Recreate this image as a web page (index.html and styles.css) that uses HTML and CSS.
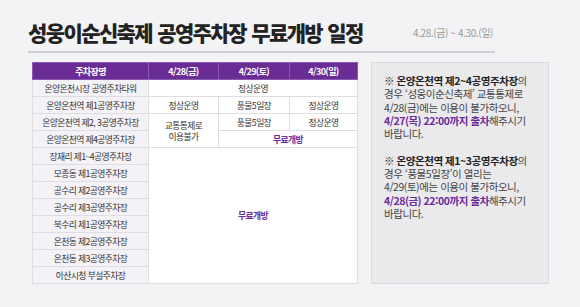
FILE: index.html
```html
<!DOCTYPE html>
<html lang="ko">
<head>
<meta charset="utf-8">
<link rel="stylesheet" href="styles.css">
</head>
<body>
<div class="page">
  <div class="head">
    <h1 class="title">성웅이순신축제 공영주차장 무료개방 일정</h1>
    <span class="date">4.28.(금) ~ 4.30.(일)</span>
  </div>
  <div class="content">
    <table class="sched">
      <colgroup>
        <col class="c1"><col class="c2"><col class="c3"><col class="c4">
      </colgroup>
      <thead>
        <tr><th>주차장명</th><th>4/28(금)</th><th>4/29(토)</th><th>4/30(일)</th></tr>
      </thead>
      <tbody>
        <tr><td class="name">온양온천시장 공영주차타워</td><td colspan="3">정상운영</td></tr>
        <tr><td class="name">온양온천역 제1공영주차장</td><td>정상운영</td><td>풍물5일장</td><td>정상운영</td></tr>
        <tr><td class="name">온양온천역 제2, 3공영주차장</td><td rowspan="2" class="two">교통통제로<br>이용불가</td><td>풍물5일장</td><td>정상운영</td></tr>
        <tr><td class="name">온양온천역 제4공영주차장</td><td colspan="2" class="free">무료개방</td></tr>
        <tr><td class="name">장재리 제1~4공영주차장</td><td colspan="3" rowspan="8" class="free">무료개방</td></tr>
        <tr><td class="name">모종동 제1공영주차장</td></tr>
        <tr><td class="name">공수리 제2공영주차장</td></tr>
        <tr><td class="name">공수리 제3공영주차장</td></tr>
        <tr><td class="name">북수리 제1공영주차장</td></tr>
        <tr><td class="name">온천동 제2공영주차장</td></tr>
        <tr><td class="name">온천동 제3공영주차장</td></tr>
        <tr><td class="name">아산시청 부설주차장</td></tr>
      </tbody>
    </table>
    <div class="notes">
      <p><b>※ 온양온천역 제2~4공영주차장</b>의<br>경우 ‘성웅이순신축제’ 교통통제로<br>4/28(금)에는 이용이 불가하오니,<br><b class="hl">4/27(목) 22:00까지 출차</b>해주시기<br>바랍니다.</p>
      <p><b>※ 온양온천역 제1~3공영주차장</b>의<br>경우 ‘풍물5일장’이 열리는<br>4/29(토)에는 이용이 불가하오니,<br><b class="hl">4/28(금) 22:00까지 출차</b>해주시기<br>바랍니다.</p>
    </div>
  </div>
</div>
</body>
</html>
```

FILE: styles.css
```css
* { box-sizing: border-box; }
html, body { margin: 0; padding: 0; }
body {
  background: #f3f3f6;
  font-family: "Noto Sans CJK KR", "Noto Sans", sans-serif;
  color: #333;
  width: 580px;
  height: 307px;
  overflow: hidden;
}
.page { padding: 0 0 0 28px; }
.head {
  width: 467px;
  display: flex;
  justify-content: space-between;
  align-items: center;
  padding: 19px 2px 6px 0;
  border-bottom: 2px solid #cfcfd3;
}
.title {
  margin: 0;
  font-size: 21px;
  line-height: 26px;
  font-weight: 900;
  letter-spacing: -1.6px;
  word-spacing: 1px;
  color: #222;
}
.date {
  font-size: 10px;
  letter-spacing: -0.4px;
  color: #999;
}
.content {
  display: flex;
  align-items: flex-start;
  gap: 13px;
  padding: 9px 0 0 4px;
}
.sched {
  border-collapse: collapse;
  width: 325px;
  table-layout: fixed;
  background: #fff;
  font-size: 8.8px;
  letter-spacing: -0.6px;
  color: #333;
}
.c1 { width: 116px; }
.c2 { width: 70px; }
.c3 { width: 71px; }
.c4 { width: 68px; }
.sched tr { height: 17px; }
.sched th {
  background: #6a2d95;
  color: #fff;
  font-weight: 700;
  font-size: 9px;
  border: 1px solid #8a5bb0;
  padding: 0;
  line-height: 15px;
}
.sched td {
  border: 1px solid #dedee2;
  text-align: center;
  padding: 0;
  line-height: 15px;
  white-space: nowrap;
}
.sched td.name { background: #f4f2f7; }
.sched td.two { line-height: 11px; }
.sched td.free { color: #6a2d9b; font-weight: 700; }
.notes {
  width: 178px;
  height: 222px;
  background: #eaeaed;
  border: 1px solid #d9d9de;
  padding: 11px 0 0 12px;
  font-size: 10.5px;
  line-height: 13.3px;
  letter-spacing: -0.45px;
  color: #444;
}
.notes p { margin: 0 0 13.3px 0; white-space: nowrap; }
.notes b { font-weight: 700; color: #222; }
.notes b.hl { color: #6a2d9b; }
```
